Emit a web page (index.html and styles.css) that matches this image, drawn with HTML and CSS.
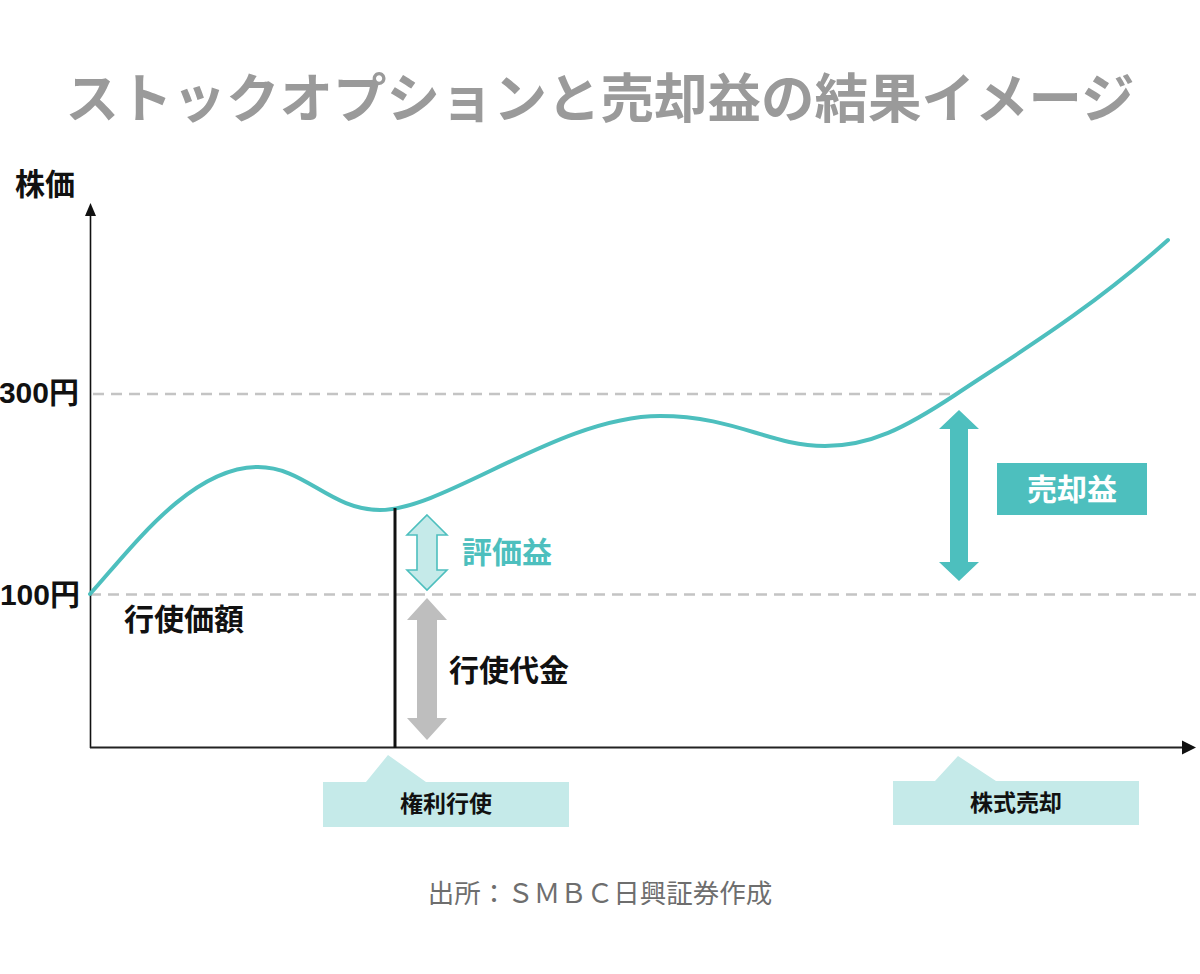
FILE: index.html
```html
<!DOCTYPE html>
<html lang="ja">
<head>
<meta charset="utf-8">
<title>ストックオプションと売却益の結果イメージ</title>
<link rel="stylesheet" href="styles.css">
</head>
<body>
<main class="page">
  <h1 class="title">ストックオプションと売却益の結果イメージ</h1>
  <div class="chart">
    <svg class="chart-svg" width="1200" height="700" viewBox="0 0 1200 700" xmlns="http://www.w3.org/2000/svg">
      <g transform="translate(0,-150)">
        <!-- dashed reference lines -->
        <line class="dash" x1="93" y1="394" x2="955" y2="394"/>
        <line class="dash" x1="90" y1="594.5" x2="1196" y2="594.5"/>
        <!-- axes -->
        <line class="axis-y" x1="90.5" y1="214" x2="90.5" y2="748"/>
        <polygon class="axis-head" points="90.5,203 85,216 96,216"/>
        <line class="axis-x" x1="90" y1="747.5" x2="1184" y2="747.5"/>
        <polygon class="axis-head" points="1196,747.5 1182,740.5 1182,754.5"/>
        <!-- stock price curve -->
        <path class="curve" d="M90,594 C130,550 190,467 258,467 C305,467 330,510 380,510 C445,510 560,416 660,416 C735,416 770,446 825,446 C870,446 905,428 955,395 C1015,355 1090,310 1168,240"/>
        <!-- exercise line -->
        <line class="exercise" x1="395" y1="508" x2="395" y2="748"/>
        <!-- arrows -->
        <polygon class="arrow-light" points="427,515 447,535 437,535 437,570 447,570 427,590 407,570 417,570 417,535 407,535"/>
        <polygon class="arrow-gray" points="427,598 447,620 437,620 437,718 447,718 427,740 407,718 417,718 417,620 407,620"/>
        <polygon class="arrow-teal" points="959,410 979,429 968,429 968,562 979,562 959,581 939,562 950,562 950,429 939,429"/>
        <!-- gain box -->
        <rect class="gain-box" x="997" y="463" width="150" height="52"/>
        <!-- callouts -->
        <polygon class="callout" points="323,782 366,782 388,755 426,782 569,782 569,827 323,827"/>
        <polygon class="callout" points="893,781 935,781 958,756 996,781 1139,781 1139,825 893,825"/>
        <!-- labels -->
        <text class="lbl lbl-axis" x="15" y="195">株価</text>
        <text class="lbl lbl-price" x="79" y="403" text-anchor="end">300円</text>
        <text class="lbl lbl-price" x="80" y="605" text-anchor="end">100円</text>
        <text class="lbl lbl-big" x="124" y="630">行使価額</text>
        <text class="lbl lbl-big lbl-teal" x="462" y="563">評価益</text>
        <text class="lbl lbl-big" x="449" y="681">行使代金</text>
        <text class="lbl lbl-big lbl-white" x="1072" y="500" text-anchor="middle">売却益</text>
        <text class="lbl lbl-small" x="446" y="812" text-anchor="middle">権利行使</text>
        <text class="lbl lbl-small" x="1016" y="811" text-anchor="middle">株式売却</text>
      </g>
    </svg>
  </div>
  <p class="source">出所：ＳＭＢＣ日興証券作成</p>
</main>
</body>
</html>
```

FILE: styles.css
```css
html, body {
  margin: 0;
  padding: 0;
  background: #ffffff;
}

body {
  font-family: "Noto Sans CJK JP", "Noto Sans", sans-serif;
}

.page {
  width: 1200px;
  display: flex;
  flex-direction: column;
  align-items: center;
}

.title {
  margin: 0;
  padding-top: 68px;
  height: 55px;
  font-size: 53.5px;
  line-height: 53.5px;
  font-weight: 700;
  color: #9a9a9a;
  text-align: center;
  letter-spacing: 0;
  white-space: nowrap;
}

.chart {
  margin-top: 27px;
  width: 1200px;
  height: 700px;
}

.chart-svg {
  display: block;
}

.dash {
  stroke: #c4c4c4;
  stroke-width: 2.5;
  stroke-dasharray: 11 7;
}

.axis-y {
  stroke: #111111;
  stroke-width: 1.6;
}

.axis-x {
  stroke: #222222;
  stroke-width: 2;
}

.axis-head {
  fill: #111111;
}

.curve {
  fill: none;
  stroke: #4dbfbe;
  stroke-width: 4;
  stroke-linecap: round;
}

.exercise {
  stroke: #111111;
  stroke-width: 3;
}

.arrow-light {
  fill: #c5eae9;
  stroke: #4dbfbe;
  stroke-width: 1.6;
  stroke-linejoin: miter;
}

.arrow-gray {
  fill: #bebebe;
}

.arrow-teal {
  fill: #4dbfbe;
}

.gain-box {
  fill: #4dbfbe;
}

.callout {
  fill: #c5eae9;
}

.lbl {
  font-family: "Noto Sans CJK JP", "Noto Sans", sans-serif;
  font-weight: 700;
  fill: #111111;
}

.lbl-axis {
  font-size: 30px;
}

.lbl-price {
  font-family: "Liberation Sans", "Noto Sans CJK JP", sans-serif;
  font-size: 30px;
}

.lbl-big {
  font-size: 30px;
}

.lbl-teal {
  fill: #4dbfbe;
}

.lbl-white {
  fill: #ffffff;
}

.lbl-small {
  font-size: 23px;
}

.source {
  margin: 29px 0 0;
  font-size: 26.5px;
  line-height: 26px;
  font-weight: 400;
  color: #6e6e6e;
  text-align: center;
}
```
